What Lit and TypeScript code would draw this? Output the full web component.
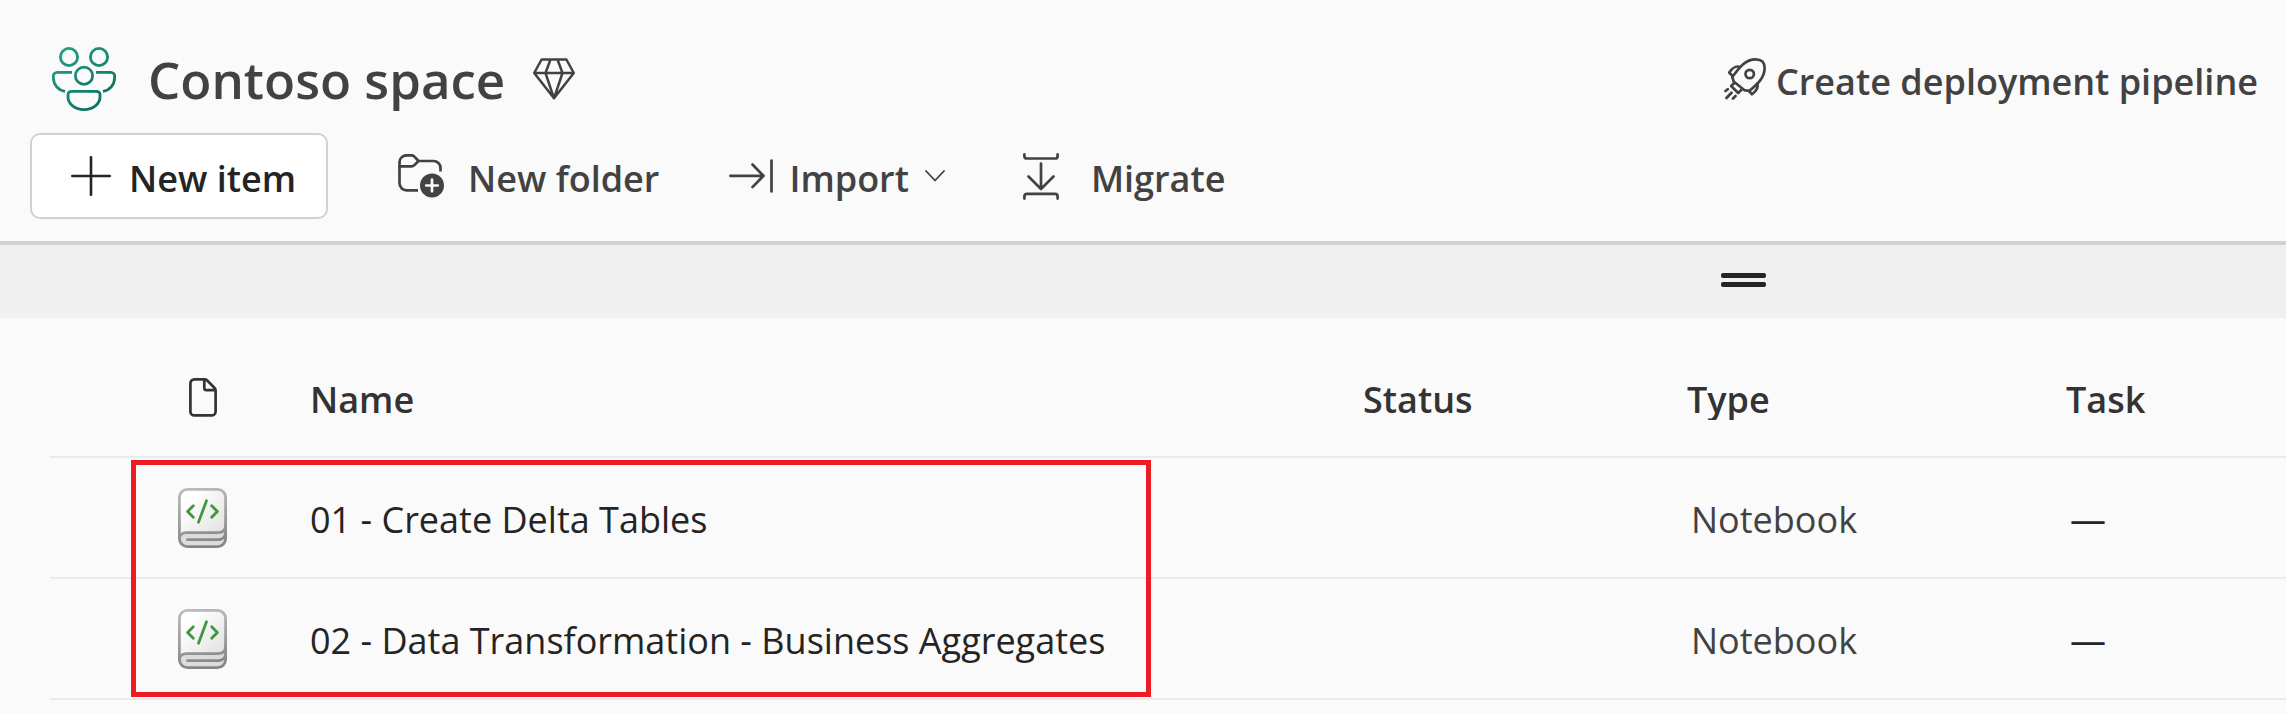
import { LitElement, html, css } from 'lit';
import { customElement, property } from 'lit/decorators.js';

interface Item {
  name: string;
  status: string;
  type: string;
  task: string;
}

const ITEMS: Item[] = [
  { name: '01 - Create Delta Tables', status: '', type: 'Notebook', task: '—' },
  { name: '02 - Data Transformation - Business Aggregates', status: '', type: 'Notebook', task: '—' },
];

const teamIcon = html`<svg width="64" height="64" viewBox="0 0 64 64" stroke-width="2.8" aria-hidden="true">
  <defs>
    <linearGradient id="team" gradientUnits="userSpaceOnUse" x1="8" y1="0" x2="56" y2="64">
      <stop offset="0" stop-color="#22a087" />
      <stop offset="1" stop-color="#0b6a5c" />
    </linearGradient>
  </defs>
  <g stroke="url(#team)">
    <circle cx="17" cy="10" r="8.6" />
    <circle cx="47" cy="10" r="8.6" />
    <circle cx="32" cy="28.7" r="8.6" />
    <path stroke-linecap="butt" d="M20 25.3H5.3a4 4 0 0 0-4 4v1C1.3 37.5 6 43.3 13 44.3" />
    <path stroke-linecap="butt" d="M44 25.3h14.7a4 4 0 0 1 4 4v1c0 7.2-4.7 13-11.7 14" />
    <path d="M19.5 44.3h25a3.5 3.5 0 0 1 3.5 3.5V50c0 7-7 12.6-16 12.6S16 57 16 50v-2.2a3.5 3.5 0 0 1 3.5-3.5z" />
  </g>
</svg>`;

const diamondIcon = html`<svg width="42" height="42" viewBox="0 0 42 42" stroke-width="2.5" role="img" aria-label="Premium">
  <path d="M8.6 1.5h24.8l7.4 13.5L21 40.3 1.2 15zM1.2 15h39.6M17.5 1.5 12.5 15 21 40.3 29.5 15l-5-13.5" />
</svg>`;

const rocketIcon = html`<svg width="42" height="42" viewBox="0 0 42 42" stroke-width="2.7" aria-hidden="true">
  <path d="M8.3 19C15 10 21 1.4 31.5 1.4c6.5 0 9.100 2.600 9.100 8.900 0 9.500-7.100 15.700-15.400 22.700l-4.700-.8L9.700 23.500z" />
  <circle cx="25.7" cy="16" r="4.2" />
  <path d="M16 9c-4.200-1.600-7 .2-10.800 5.500l3.600 3.800M33.500 25.300c.6 4.700-.7 7.200-5.500 11l-3-3.300M10.200 25l-3 3 7 7 3.300-3.300" />
  <path d="M1.500 33l2.300-1.800M2.500 40l5-5.300M9 40.500l2.500-2.500" />
</svg>`;

const plusIcon = html`<svg width="40" height="40" viewBox="0 0 40 40" stroke-width="2.6" aria-hidden="true">
  <path d="M20 1.300v37.400M1.300 20h37.400" />
</svg>`;

const folderIcon = html`<svg width="46" height="45" viewBox="0 0 46 45" stroke-width="2.7" aria-hidden="true">
  <path d="M20 36.300H8.500a7 7 0 0 1-7-7v-21a7 7 0 0 1 7-7h4.800c1.200 0 2.300.4 3.100 1.300L20.500 7h15a7 7 0 0 1 7 7v3.500" stroke-linecap="butt" />
  <path d="M1.500 12.300h12c1.200 0 2.100-.4 2.900-1.200L20.500 7" />
  <circle cx="34" cy="31.5" r="12" fill="currentColor" stroke="none" />
  <path d="M34 25.700v11.600M28.200 31.500h11.600" stroke="#fafafa" />
</svg>`;

const importIcon = html`<svg width="44" height="34" viewBox="0 0 44 34" stroke-width="2.7" aria-hidden="true">
  <path d="M1.400 16.800h33M23.500 5.500l11 11.300-11 11.300M42.500 1.500v31" />
</svg>`;

const chevronIcon = html`<svg width="20" height="12" viewBox="0 0 20 12" stroke-width="1.8" aria-hidden="true">
  <path d="M1 1l9 9.500L19 1" />
</svg>`;

const migrateIcon = html`<svg width="36" height="47" viewBox="0 0 36 47" stroke-width="2.7" aria-hidden="true">
  <path d="M1.400 1.400v1.500c0 1.600 1 2.600 2.600 2.600h28c1.600 0 2.600-1 2.600-2.600V1.400M1.400 45.600v-2.100c0-1.600 1-2.600 2.600-2.600h28c1.600 0 2.600 1 2.600 2.600v2.100M18 10.500v25.300M5.500 23.500L18 36l12.500-12.500" />
</svg>`;

const fileIcon = html`<svg width="28" height="42" viewBox="0 0 28 42" stroke-width="2.7" aria-label="Item kind" role="img">
  <path d="M5.400 1.400h10.100c1 0 2 .4 2.700 1.100l7.200 7.300c.8.800 1.200 1.700 1.200 2.800v20.800a4 4 0 0 1-4 4H5.400a4 4 0 0 1-4-4v-28a4 4 0 0 1 4-4zM15.300 1.500v8.400c0 1.300.9 2.200 2.200 2.200h8.700" />
</svg>`;

const notebookIcon = html`<svg width="49" height="60" viewBox="0 0 49 60" stroke-width="2.8" aria-hidden="true">
  <defs>
    <linearGradient id="edge" gradientUnits="userSpaceOnUse" x1="0" y1="0" x2="10" y2="60">
      <stop offset="0" stop-color="#bdbdbd" />
      <stop offset="1" stop-color="#868686" />
    </linearGradient>
    <linearGradient id="cover" x1="0" y1="0" x2="1" y2="1">
      <stop offset="0.2" stop-color="#ffffff" />
      <stop offset="1" stop-color="#dedede" />
    </linearGradient>
  </defs>
  <rect x="1.4" y="1.4" width="46.2" height="57.2" rx="8" fill="#dcdcdc" stroke="none" />
  <path d="M1.400 51V9.400a8 8 0 0 1 8-8h30.200a8 8 0 0 1 8 8V37c0 5-3 7.700-8 7.700H8.400c-4 0-7 2.300-7 6.300z" fill="url(#cover)" stroke="none" />
  <g stroke="url(#edge)">
    <rect x="1.4" y="1.4" width="46.2" height="57.2" rx="8" />
    <path d="M1.400 51c0-4 3-6.300 7-6.300h31.200c5 0 8-2.700 8-7.700M9.500 51.700h30c4 0 7-1.700 8-6" />
  </g>
  <path d="M15.300 17.700l-5.700 5.800 5.700 5.800M33.700 17.700l5.700 5.800-5.700 5.800M28.500 12.700l-8 21.600" stroke="#43963f" />
</svg>`;

const baseStyles = css`
  * {
    box-sizing: border-box;
  }
  svg {
    display: block;
    flex: none;
    fill: none;
    stroke: currentColor;
    stroke-linecap: round;
    stroke-linejoin: round;
  }
`;

@customElement('item-table')
export class ItemTable extends LitElement {
  @property({ attribute: false }) items: Item[] = [];

  static styles = [
    baseStyles,
    css`
      :host {
        display: block;
        position: relative;
        padding-left: 50px;
      }
      .table {
        width: 100%;
        table-layout: fixed;
        border-spacing: 0;
      }
      .head,
      .cell {
        padding: 0;
        border-bottom: 2px solid #ebebeb;
        text-align: left;
        vertical-align: middle;
        white-space: nowrap;
      }
      .head {
        height: 140px;
        padding-top: 24px;
        color: #333;
        font-weight: 600;
      }
      .cell {
        height: 121px;
        color: #242424;
      }
      .label {
        display: block;
        padding-top: 2px;
        line-height: 40px;
      }
      .clipped {
        overflow: hidden;
      }
      .value {
        padding-top: 4px;
      }
      .kind-col {
        width: 260px;
      }
      .status-col {
        width: 324px;
      }
      .type-col {
        width: 379px;
      }
      .task-col {
        width: 220px;
      }
      .glyph {
        display: grid;
        justify-items: center;
        width: 49px;
        margin-left: 128px;
      }
      .inset {
        padding-left: 4px;
      }
      .muted {
        color: #424242;
      }
      .link {
        color: inherit;
        text-decoration: none;
      }
      .highlight {
        position: absolute;
        top: 142px;
        bottom: 3px;
        left: 131px;
        right: 1135px;
        border: 5px solid #ed1c24;
        pointer-events: none;
      }
    `,
  ];

  render() {
    return html`
      <table class="table">
        <colgroup>
          <col class="kind-col" />
          <col />
          <col class="status-col" />
          <col class="type-col" />
          <col class="task-col" />
        </colgroup>
        <thead>
          <tr>
            <th class="head" scope="col"><span class="glyph">${fileIcon}</span></th>
            <th class="head" scope="col"><span class="label">Name</span></th>
            <th class="head" scope="col"><span class="label">Status</span></th>
            <th class="head" scope="col"><span class="label clipped">Type</span></th>
            <th class="head" scope="col"><span class="label">Task</span></th>
          </tr>
        </thead>
        <tbody>
          ${this.items.map(
            (item) => html`<tr>
              <td class="cell"><span class="glyph">${notebookIcon}</span></td>
              <td class="cell value"><a class="link" href="#">${item.name}</a></td>
              <td class="cell value">${item.status}</td>
              <td class="cell value inset muted">${item.type}</td>
              <td class="cell value inset">${item.task}</td>
            </tr>`
          )}
        </tbody>
      </table>
      <div class="highlight"></div>
    `;
  }
}

@customElement('app-root')
export class AppRoot extends LitElement {
  static styles = [
    baseStyles,
    css`
      :host {
        display: block;
        min-height: 100vh;
        background: #fafafa;
        color: #424242;
        font-family: 'Open Sans', 'Noto Sans', sans-serif;
        font-size: 36px;
        line-height: 48px;
      }
      .title-bar {
        display: flex;
        align-items: center;
        padding: 39px 28px 14px 52px;
      }
      .title {
        margin: 0 28px 0 32px;
        font-size: 51px;
        line-height: 80px;
        font-weight: 600;
        white-space: nowrap;
      }
      .action {
        display: flex;
        align-items: center;
        margin: 0;
        padding: 0;
        border: 0;
        background: none;
        color: inherit;
        font: inherit;
        font-weight: 600;
        white-space: nowrap;
      }
      .text {
        padding-top: 6px;
      }
      .pipeline {
        margin-left: auto;
        gap: 10px;
      }
      .toolbar {
        display: flex;
        align-items: center;
        gap: 70px;
        padding: 0 30px 22px;
        border-bottom: 4px solid #d1d1d1;
      }
      .new-item {
        height: 86px;
        padding: 0 30px 0 39px;
        gap: 18px;
        border: 2px solid #d1d1d1;
        border-radius: 10px;
        background: #fff;
        color: #242424;
      }
      .folder {
        gap: 24px;
      }
      .import {
        gap: 16px;
        padding-right: 8px;
      }
      .migrate {
        gap: 32px;
      }
      .splitter {
        display: flex;
        flex-direction: column;
        align-items: center;
        justify-content: center;
        gap: 4px;
        height: 73px;
        padding: 0 0 3px 1200px;
        background: #f0f0f0;
      }
      .grip {
        width: 45px;
        height: 5px;
        border-radius: 2px;
        background: #242424;
      }
    `,
  ];

  render() {
    return html`
      <header>
        <div class="title-bar">
          ${teamIcon}
          <h1 class="title">Contoso space</h1>
          ${diamondIcon}
          <button class="action pipeline" type="button">${rocketIcon}<span class="text">Create deployment pipeline</span></button>
        </div>
        <div class="toolbar" role="toolbar">
          <button class="action new-item" type="button">${plusIcon}<span class="text">New item</span></button>
          <button class="action folder" type="button">${folderIcon}<span class="text">New folder</span></button>
          <button class="action import" type="button" aria-haspopup="menu">
            ${importIcon}<span class="text">Import</span>${chevronIcon}
          </button>
          <button class="action migrate" type="button">${migrateIcon}<span class="text">Migrate</span></button>
        </div>
      </header>
      <div class="splitter" role="separator">
        <span class="grip"></span>
        <span class="grip"></span>
      </div>
      <item-table .items=${ITEMS}></item-table>
    `;
  }
}
